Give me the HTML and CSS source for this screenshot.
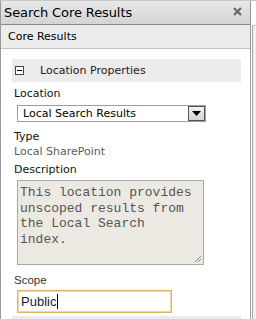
FILE: index.html
```html
<!DOCTYPE html>
<html>
<head>
<meta charset="utf-8">
<link rel="stylesheet" href="styles.css">
</head>
<body>
<div class="frame">
  <div class="pane">
    <div class="header">
      <span class="title">Search Core Results</span>
      <svg class="close" width="9" height="9" viewBox="0 0 9 9"><path d="M1 1L8 8M8 1L1 8" stroke="#6a6a6a" stroke-width="2.2"/></svg>
    </div>
    <div class="sub">Core Results</div>
    <div class="body">
      <div class="section-head">
        <span class="minus"></span>
        <span class="section-title">Location Properties</span>
      </div>
      <div class="fields">
        <div class="label l-loc">Location</div>
        <div class="select">
          <span class="select-text">Local Search Results</span>
          <span class="select-btn"><svg width="9" height="5" viewBox="0 0 9 5"><path d="M0 0H9L4.5 5Z" fill="#000"/></svg></span>
        </div>
        <div class="label l-type">Type</div>
        <div class="value">Local SharePoint</div>
        <div class="label l-desc">Description</div>
        <div class="textarea">This location provides unscoped results from the Local Search index.<svg class="grip" width="8" height="8" viewBox="0 0 8 8"><path d="M7 1L1 7M7 4L4 7" stroke="#888" stroke-width="1"/></svg></div>
        <div class="label l-scope">Scope</div>
        <div class="input">Public<span class="caret"></span></div>
      </div>
      <div class="next-head"></div>
    </div>
  </div>
  <div class="side"></div>
</div>
</body>
</html>
```
FILE: styles.css
```css
html, body {
  margin: 0;
  padding: 0;
  background: #ffffff;
  height: 319px;
  overflow: hidden;
}
.frame {
  display: flex;
  height: 319px;
  border-top: 1px solid #c9c9c9;
  box-sizing: border-box;
}
.pane {
  width: 249px;
  flex-shrink: 0;
  border-left: 1px solid #9a9a9a;
  border-right: 1px solid #9a9a9a;
  font-family: "DejaVu Sans", Verdana, sans-serif;
  color: #000;
}
.side {
  flex: 1;
  margin-top: 24px;
  margin-left: 1px;
  border-left: 1px solid #a8a8a8;
  border-top: 1px solid #c8c8c8;
  background: #f0f0f0;
}
.header {
  height: 24px;
  background: linear-gradient(#e8e8e8, #d4d4d4);
  border-bottom: 1px solid #8a8a8a;
  display: flex;
  align-items: center;
  justify-content: space-between;
  padding: 0 8px 0 3px;
  box-sizing: border-box;
}
.title {
  font-size: 13px;
  letter-spacing: -0.1px;
  color: #000;
}
.close {
  display: block;
  margin-top: -3px;
}
.sub {
  height: 24px;
  background: #ececec;
  border-bottom: 1px solid #c4c4c4;
  padding-left: 7px;
  font-size: 11px;
  line-height: 24px;
  box-sizing: border-box;
}
.body {
  padding: 10px 9px 0 11px;
}
.section-head {
  height: 23px;
  background: #ebebeb;
  display: flex;
  align-items: center;
  padding-left: 3px;
}
.minus {
  width: 7px;
  height: 7px;
  border: 1px solid #444;
  background: #fff;
  position: relative;
  margin-right: 16px;
}
.minus::after {
  content: "";
  position: absolute;
  left: 1px;
  right: 1px;
  top: 3px;
  height: 1px;
  background: #000;
}
.section-title {
  font-size: 11px;
  color: #222;
}
.fields {
  padding-left: 2px;
}
.label {
  font-size: 11px;
  line-height: 14px;
  margin-top: 3px;
  color: #111;
}
.l-loc { margin-top: 5px; }
.select {
  margin-top: 4px;
  margin-left: 3px;
  width: 189px;
  height: 17px;
  border: 1px solid #9d9d9d;
  box-sizing: border-box;
  display: flex;
  align-items: center;
  justify-content: space-between;
}
.select-text {
  font-size: 11px;
  padding-left: 5px;
}
.select-btn {
  width: 17px;
  height: 15px;
  box-sizing: border-box;
  border: 1px solid #555;
  background: linear-gradient(#f2f2f2, #d4d4d4);
  display: flex;
  align-items: center;
  justify-content: center;
}
.select-btn svg { display: block; }
.l-type { margin-top: 8px; }
.value {
  font-size: 11px;
  line-height: 14px;
  margin-top: 1px;
  color: #5c5c5c;
}
.l-desc { margin-top: 4px; }
.textarea {
  position: relative;
  margin-top: 3px;
  margin-left: 3px;
  width: 187px;
  height: 85px;
  box-sizing: border-box;
  border: 1px solid #a8a8a8;
  background: #ebe9e2;
  font-family: "Liberation Mono", "Courier New", monospace;
  font-size: 13px;
  line-height: 15.7px;
  color: #555;
  padding: 4px 8px 0 2px;
}
.grip {
  position: absolute;
  right: 1px;
  bottom: 1px;
}
.l-scope {
  margin-top: 8px;
  font-family: "Liberation Sans", Arial, sans-serif;
  font-size: 11.5px;
  color: #333;
}
.input {
  margin-top: 3px;
  margin-left: 3px;
  width: 155px;
  height: 23px;
  box-sizing: border-box;
  border: 1px solid #e0b463;
  box-shadow: inset 0 0 0 1px #f3d7a3;
  font-family: "Liberation Sans", Arial, sans-serif;
  font-size: 13px;
  line-height: 21px;
  padding-left: 3px;
  color: #1a1a3a;
  display: flex;
  align-items: center;
}
.caret {
  width: 1px;
  height: 15px;
  background: #000;
  margin-left: 1px;
}
.next-head {
  margin-top: 3px;
  height: 10px;
  background: #ebebeb;
}
```
